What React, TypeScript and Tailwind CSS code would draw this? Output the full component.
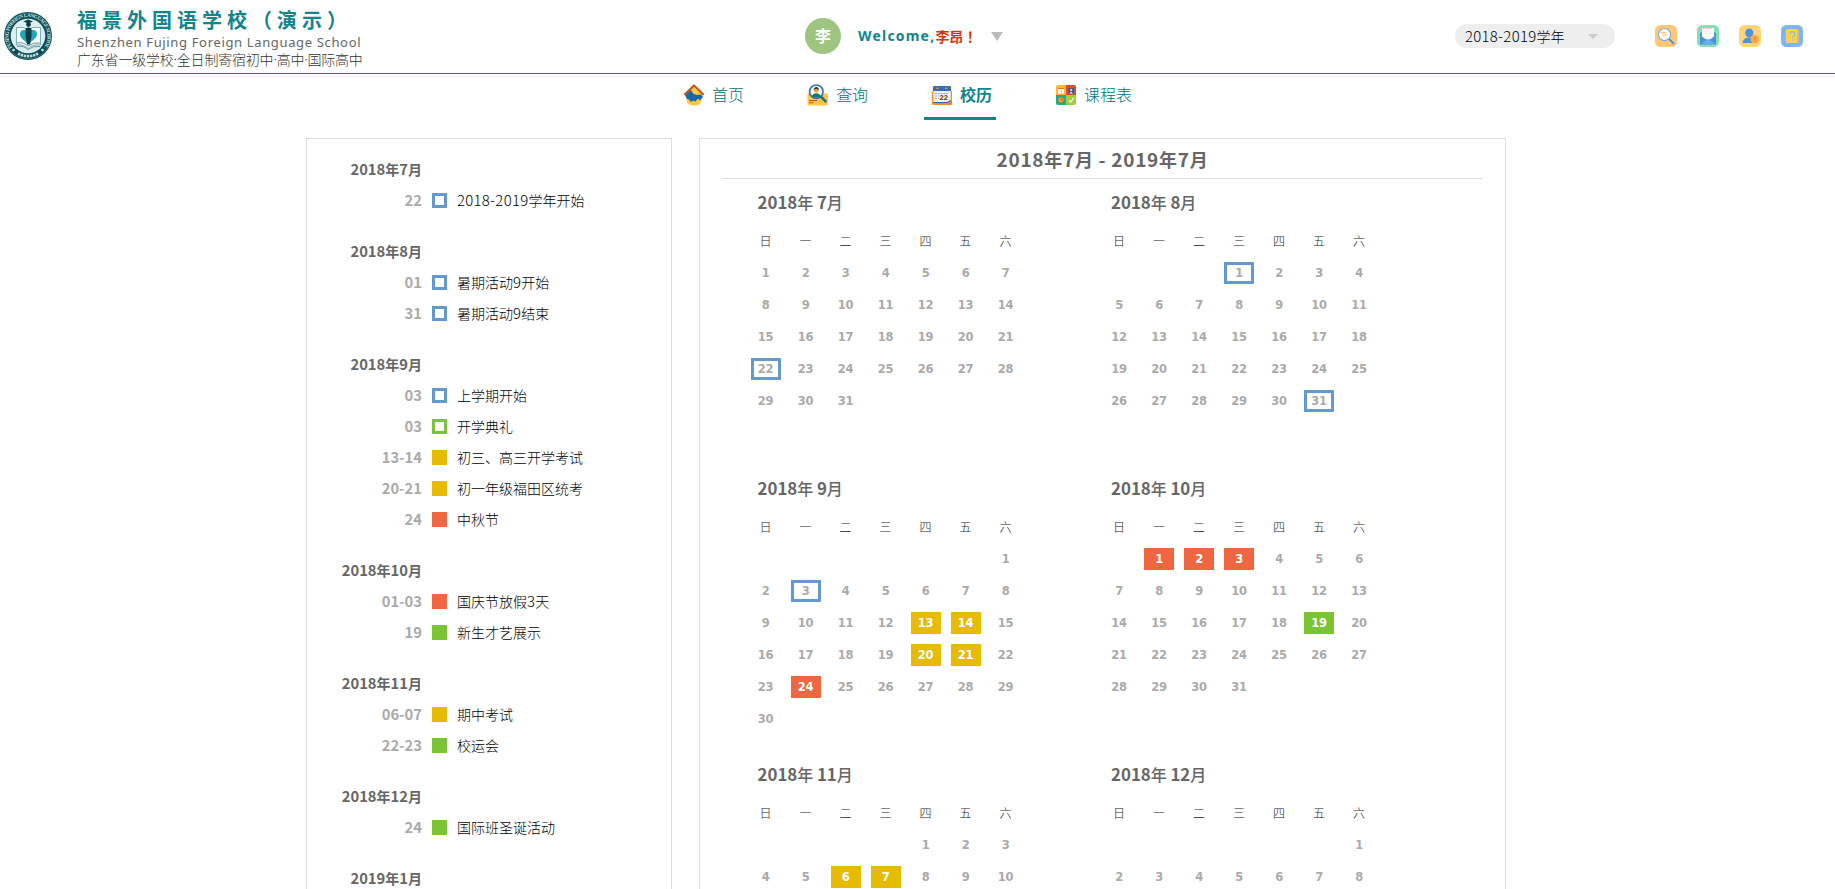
import React from "react";

type Kind = "blueBox" | "greenBox" | "yellow" | "red" | "green";

const swatch: Record<Kind, string> = {
  blueBox: "border-3 border-[#6499cd]",
  greenBox: "border-3 border-[#7bc434]",
  yellow: "bg-[#e7ba04]",
  red: "bg-[#ee6741]",
  green: "bg-[#7bc434]",
};

const dayMark: Record<Kind, string> = {
  blueBox: "border-3 border-[#6499cd] text-[#aaa]",
  greenBox: "border-3 border-[#7bc434] text-[#aaa]",
  yellow: "bg-[#e7ba04] text-white",
  red: "bg-[#ee6741] text-white",
  green: "bg-[#7bc434] text-white",
};

const groups: { month: string; events: [string, Kind, string][] }[] = [
  { month: "2018年7月", events: [["22", "blueBox", "2018-2019学年开始"]] },
  {
    month: "2018年8月",
    events: [
      ["01", "blueBox", "暑期活动9开始"],
      ["31", "blueBox", "暑期活动9结束"],
    ],
  },
  {
    month: "2018年9月",
    events: [
      ["03", "blueBox", "上学期开始"],
      ["03", "greenBox", "开学典礼"],
      ["13-14", "yellow", "初三、高三开学考试"],
      ["20-21", "yellow", "初一年级福田区统考"],
      ["24", "red", "中秋节"],
    ],
  },
  {
    month: "2018年10月",
    events: [
      ["01-03", "red", "国庆节放假3天"],
      ["19", "green", "新生才艺展示"],
    ],
  },
  {
    month: "2018年11月",
    events: [
      ["06-07", "yellow", "期中考试"],
      ["22-23", "green", "校运会"],
    ],
  },
  { month: "2018年12月", events: [["24", "green", "国际班圣诞活动"]] },
  { month: "2019年1月", events: [] },
];

const months: { label: string; start: number; days: number; marks: Record<number, Kind> }[] = [
  { label: "2018年 7月", start: 0, days: 31, marks: { 22: "blueBox" } },
  { label: "2018年 8月", start: 3, days: 31, marks: { 1: "blueBox", 31: "blueBox" } },
  {
    label: "2018年 9月",
    start: 6,
    days: 30,
    marks: { 3: "blueBox", 13: "yellow", 14: "yellow", 20: "yellow", 21: "yellow", 24: "red" },
  },
  { label: "2018年 10月", start: 1, days: 31, marks: { 1: "red", 2: "red", 3: "red", 19: "green" } },
  { label: "2018年 11月", start: 4, days: 10, marks: { 6: "yellow", 7: "yellow" } },
  { label: "2018年 12月", start: 6, days: 8, marks: {} },
];

const weekdays = ["日", "一", "二", "三", "四", "五", "六"];

/* Sets digit runs slightly larger than the Chinese characters beside them. */
function Mixed({ text, light }: { text: string; light?: boolean }) {
  return (
    <>
      {text.split(/([0-9-]+)/).map((part, i) =>
        i % 2 ? (
          <span key={i} className={light ? "text-[1.065em] tracking-[0.3px]" : "text-[1.055em]"}>
            {part}
          </span>
        ) : (
          part
        ),
      )}
    </>
  );
}

function SchoolLogo() {
  return (
    <svg className="h-12 w-12 shrink-0" viewBox="0 0 48 48">
      <defs>
        <path id="ring" d="M8.2 35.5A19.4 19.4 0 1 1 39.8 35.5" />
      </defs>
      <circle cx="24" cy="24" r="24" fill="#0c4b55" />
      <circle cx="24" cy="24" r="22.8" fill="none" stroke="#5d98a0" strokeWidth=".5" />
      <circle cx="24" cy="24" r="17.3" fill="#d9eef3" />
      <text fontSize="5" fontWeight="700" fill="#d5e8ea" fontFamily="Liberation Serif, serif" textLength="84">
        <textPath href="#ring">FUJING FOREIGN LANGUAGE SCHOOL</textPath>
      </text>
      <circle cx="9.5" cy="38" r="1.3" fill="#d5e8ea" />
      <circle cx="38.5" cy="38" r="1.3" fill="#d5e8ea" />
      <path d="M14 41.500A20.200 20.200 0 0 0 34 41.500" fill="none" stroke="#c5dcdf" strokeWidth="2.6" strokeDasharray="2.4 .7" />
      <path d="M12.500 15.500h7L24 18l4.500-2.500h8V33q-8-1-12.500 3.500-4-4.500-11.500-3.500z" fill="#f7fcfd" stroke="#5a8d98" strokeWidth=".7" />
      <path d="M13 31q7-1 11 3 5-4 12-3M13 34.500q7-1 11 3 5-4 12-3" fill="none" stroke="#33707c" strokeWidth=".7" />
      <path d="M24 32.500c-3-4-8-6-8-10.500 0-4.500 5-5 8-2 4-3 9-2.500 9 2 0 4.500-5 6.500-9 10.500z" fill="#1fa9b8" />
      <path d="M19.500 9.500L24 7.500l5 2-5 2z" fill="#0c3c46" />
      <circle cx="24.500" cy="12.500" r="2.400" fill="#0c3c46" />
      <path d="M21.500 16.500q3-2 6 0v8l-1.500 8h-3l-1.500-8z" fill="#0c3c46" />
    </svg>
  );
}

function HomeIcon() {
  return (
    <svg className="h-[22px] w-5" viewBox="0 0 20 22">
      <path d="M10 3l7.500 7v6q0 5.500-7.500 5.500T2.500 16v-6z" fill="#ffc83d" />
      <path d="M1 11l6-5 2 3.500L12.500 11l5-.5 1.500 2.500-3 3.500-2-2-2.500 3-2.500-1-2 1.500-2-2.500-2-.5z" fill="#1668ad" />
      <path d="M10 1.500L1 10.200M10 1.500l9 8.700" stroke="#c4520f" strokeWidth="2" fill="none" strokeLinecap="round" />
    </svg>
  );
}

function QueryIcon() {
  return (
    <svg className="-ml-px h-[22px] w-[21px]" viewBox="0 0 21 22">
      <path d="M.5 10.500Q.5 9.500 1.500 9.500h18.500q1 0 1 1V20q0 1.500-1.500 1.500H2Q.5 21.500.5 20z" fill="#ffc843" />
      <path d="M2 16.500h8M2 18.800h4.500" stroke="#c9540f" strokeWidth="1" />
      <circle cx="9.300" cy="7.700" r="6.700" fill="#fff" stroke="#3c74ae" strokeWidth="1.700" />
      <circle cx="9.300" cy="6.300" r="2.400" fill="#f7a13b" />
      <path d="M6.600 6Q7 3 9.300 3t2.700 3l-2.700-1.200z" fill="#173a57" />
      <path d="M4.700 12.300q1.500-3.100 4.600-3.100t4.600 3.100q-4.600 2.900-9.200 0z" fill="#137d66" />
      <path d="M14.200 12.800l4.300 4.600" stroke="#2e629a" strokeWidth="2.600" strokeLinecap="round" />
    </svg>
  );
}

function CalendarIcon() {
  return (
    <svg className="h-[22px] w-5" viewBox="0 0 20 22">
      <path d="M0 7h20v11l-3 3H1.500Q0 21 0 19.500z" fill="#ff8e12" />
      <path d="M1.300 5h17.400v11.500l-3 2.500H1.300z" fill="#edf3fa" />
      <path d="M1.300 18.500h14.200l3-2" stroke="#2f62b5" strokeWidth="1.200" fill="none" />
      <path d="M1 3q0-1 1-1h16q1 0 1 1v4H1z" fill="#3769b8" />
      <path d="M4 4.200h3M13 4.200h3" stroke="#c9b82b" strokeWidth="1" />
      <path d="M3 9.500h14M3 12h4M3 14.500h4" stroke="#a4acb5" strokeWidth="1" strokeDasharray="2 .8" />
      <text x="7.500" y="16.300" fontSize="7.500" fontWeight="700" fill="#39434d" fontFamily="Liberation Sans, sans-serif">
        22
      </text>
      <path d="M15 21l5-5v3.500Q20 21 18.500 21z" fill="#ff7a00" />
    </svg>
  );
}

function TimetableIcon() {
  return (
    <svg className="h-[22px] w-5" viewBox="0 0 20 22">
      <path d="M0 3q0-2 2-2h8v10H0z" fill="#ffb92c" />
      <path d="M10 1h8q2 0 2 2v8H10z" fill="#d8502b" />
      <path d="M0 11h10v10H2q-2 0-2-2z" fill="#12b08f" />
      <path d="M10 11h10v8q0 2-2 2h-8z" fill="#a0cf3a" />
      <rect x="2" y="4.500" width="6" height="5" fill="#fff" />
      <path d="M2 4.500h6" stroke="#d8702b" strokeWidth="1" />
      <path d="M4.500 6.500h1v2" stroke="#aaa" strokeWidth=".7" fill="none" />
      <rect x="12.500" y="4" width="5.500" height="6" rx=".5" fill="#2b56b0" />
      <circle cx="15.200" cy="6" r="1.200" fill="#ffd24a" />
      <path d="M13.300 9.500q1.900-3 3.800 0z" fill="#fff" />
      <circle cx="5" cy="15.800" r="2.900" fill="#f6a53a" stroke="#c96a16" strokeWidth=".7" />
      <path d="M5 14v2h1.800" stroke="#8a4510" strokeWidth=".7" fill="none" />
      <path d="M13 16.300l1.700 1.700 3-4.200" stroke="#fff" strokeWidth="1.200" fill="none" />
    </svg>
  );
}

function SearchTool() {
  return (
    <svg className="h-[22px] w-[22px]" viewBox="0 0 22 22">
      <rect width="22" height="22" rx="5.500" fill="#ffc876" />
      <path d="M13.500 13.500l5 4.800" stroke="#4a90d9" strokeWidth="2" strokeLinecap="round" />
      <circle cx="9.500" cy="9.500" r="6" fill="#fff" stroke="#79aee3" strokeWidth="1.100" />
      <path d="M6 7.700h5M7 10h5" stroke="#ffb24f" strokeWidth=".9" strokeLinecap="round" />
    </svg>
  );
}

function MailTool() {
  return (
    <svg className="h-[22px] w-[22px]" viewBox="0 0 22 22">
      <rect width="22" height="22" rx="5.500" fill="#81e0b4" />
      <path d="M3 8.500l2-1.500h12l2 1.500V19.500H3z" fill="#4a92dc" />
      <path d="M5 3h12v8.500q-3 3-6 3t-6-3z" fill="#fff" />
      <path d="M6 3.500h10" stroke="#f3a9a9" strokeWidth=".9" strokeDasharray="1.500 1" />
      <path d="M6.500 6h8M6.500 8.200h9" stroke="#d5dce6" strokeWidth=".7" />
      <path d="M3 19.500l6.500-4.500h3l6.500 4.500z" fill="#67abec" />
    </svg>
  );
}

function UserTool() {
  return (
    <svg className="h-[22px] w-[22px]" viewBox="0 0 22 22">
      <rect width="22" height="22" rx="5.500" fill="#ffd578" />
      <ellipse cx="10.300" cy="7.800" rx="4.100" ry="4.400" fill="#4c93dc" />
      <path d="M3.500 18q0-4 5-5.500h3.500q4 1.500 4.500 5.500z" fill="#4c93dc" />
      <circle cx="15.800" cy="14.200" r="4.200" fill="#ffab42" />
      <path d="M15.800 11.800v3M15.800 15.800v1" stroke="#e97a2e" strokeWidth="1.100" />
    </svg>
  );
}

function HelpTool() {
  return (
    <svg className="h-[22px] w-[22px]" viewBox="0 0 22 22">
      <rect width="22" height="22" rx="5.500" fill="#7db4fb" />
      <rect x="5" y="4" width="12.500" height="14" rx="1" fill="#ffd044" />
      <path d="M16.500 4v14" stroke="#f5bd2d" strokeWidth="1.200" />
      <path d="M4 6.500h3M4 9.500h3M4 12.500h3M4 15.500h3" stroke="#c8d0a0" strokeWidth="1.100" />
      <path d="M9.300 9q0-2.300 2.200-2.300T13.700 9q0 1.200-1.200 2t-1 2M11.500 14.300v1.300" stroke="#8dbcec" strokeWidth="1.200" fill="none" />
    </svg>
  );
}

const tabs = [
  { label: "首页", Icon: HomeIcon },
  { label: "查询", Icon: QueryIcon },
  { label: "校历", Icon: CalendarIcon, active: true },
  { label: "课程表", Icon: TimetableIcon },
];

function Month({ label, start, days, marks }: (typeof months)[number]) {
  return (
    <section className="h-[286px]">
      <h2 className="flex h-[46px] items-center pl-3 text-base font-medium whitespace-pre text-[#666]">
        <span className="font-bold">
          <Mixed text={label.slice(0, 4)} />
        </span>
        {"年 "}
        <span className="font-bold">
          <Mixed text={label.slice(6, -1)} />
        </span>
        月
      </h2>
      <div className="grid w-[280px] grid-cols-7">
        {weekdays.map((d) => (
          <div key={d} className="flex h-8 items-center justify-center text-xs font-light text-[#222]">
            {d}
          </div>
        ))}
        {Array.from({ length: start }, (_, i) => (
          <div key={`blank-${i}`} />
        ))}
        {Array.from({ length: days }, (_, i) => i + 1).map((day) => (
          <div key={day} className="flex h-8 items-center justify-center">
            <div
              className={`flex h-[22px] w-[30px] items-center justify-center pt-0.5 font-['DejaVu_Sans',sans-serif] text-[11.5px] leading-none font-bold tracking-[-0.35px] ${
                marks[day] ? dayMark[marks[day]] : "text-[#aaa]"
              }`}
            >
              {day}
            </div>
          </div>
        ))}
      </div>
    </section>
  );
}

export default function App() {
  return (
    <div className="h-screen w-full overflow-hidden bg-white font-['Noto_Sans_CJK_SC',sans-serif] text-black">
      <header className="flex h-[74px] items-center border-b border-[#0b7f86] pr-8 pb-px pl-1">
        <SchoolLogo />
        <div className="ml-[25px] w-[728px] pt-0.5 whitespace-nowrap">
          <h1 className="text-[20px] leading-[27px] font-bold tracking-[5px] text-[#10858c]">
            福景外国语学校
            <span className="font-['Noto_Sans_CJK_TC',sans-serif]">（</span>
            演示
            <span className="font-['Noto_Sans_CJK_TC',sans-serif]">）</span>
          </h1>
          <p className="font-['Noto_Sans',sans-serif] text-[13px] leading-[18px] tracking-[0.65px] text-[#666]">
            Shenzhen Fujing Foreign Language School
          </p>
          <p className="font-['Noto_Sans','Noto_Sans_CJK_SC',sans-serif] text-sm leading-[18px] font-light tracking-[-0.2px] text-[#333]">
            广东省一级学校·全日制寄宿初中·高中·国际高中
          </p>
        </div>
        <div className="flex w-[650px] items-center">
          <span className="flex h-9 w-9 items-center justify-center rounded-full bg-[#9dc481] pb-0.5 text-base font-bold text-white">
            李
          </span>
          <span className="ml-[17px] font-['Noto_Sans',sans-serif] text-sm font-bold tracking-[1.2px] text-[#10858c]">
            Welcome,
          </span>
          <span className="font-['Noto_Sans_CJK_TC',sans-serif] text-sm font-bold text-[#d0390f]">李昂！</span>
          <svg className="ml-[14px] h-[9px] w-3" viewBox="0 0 12 9">
            <path d="M0 0h12L6 9z" fill="#bbb" />
          </svg>
        </div>
        <div className="flex h-6 w-40 shrink-0 items-center justify-between rounded-full bg-[#eee] pr-[17px] pl-2.5 text-sm font-light">
          <span className="pb-px">
            <Mixed text="2018-2019学年" light />
          </span>
          <svg className="h-[5px] w-2.5" viewBox="0 0 10 5">
            <path d="M0 0h10L5 5z" fill="#ccc" />
          </svg>
        </div>
        <div className="ml-10 flex gap-5">
          <SearchTool />
          <MailTool />
          <UserTool />
          <HelpTool />
        </div>
      </header>

      <nav className="flex h-16 gap-[52px] pl-[676px]">
        {tabs.map(({ label, Icon, active }) => (
          <a
            key={label}
            className={`flex h-[46px] items-center gap-2 border-b-3 pr-1 pb-0.5 pl-2 text-base ${
              active ? "border-[#10858c] font-bold text-[#10858c]" : "border-transparent font-light text-[#00757c]"
            }`}
          >
            <Icon />
            <span className="pb-0.5">{label}</span>
          </a>
        ))}
      </nav>

      <main className="flex gap-[27px] pl-[306px]">
        <aside className="h-[800px] w-[366px] border border-[#ddd] pt-[15px]">
          {groups.map((g) => (
            <section key={g.month} className="mb-5">
              <h3 className="flex h-[31px] w-[115px] items-center justify-end pb-0.5 text-sm font-bold whitespace-nowrap text-[#666]">
                <Mixed text={g.month} />
              </h3>
              {g.events.map(([date, kind, name]) => (
                <div key={date + name} className="flex h-[31px] items-center text-sm">
                  <span className="w-[115px] pb-0.5 text-right font-bold text-[#aaa]">
                    <Mixed text={date} />
                  </span>
                  <span className={`mr-2.5 ml-2.5 h-[15px] w-[15px] ${swatch[kind]}`} />
                  <span className="pb-0.5 font-light">
                    <Mixed text={name} light />
                  </span>
                </div>
              ))}
            </section>
          ))}
        </aside>

        <div className="h-[800px] w-[807px] border border-[#ddd] px-[22px]">
          <h1 className="flex h-10 items-center justify-center border-b border-[#ddd] pt-px text-lg font-bold tracking-[0.75px] text-[#666]">
            <span className="whitespace-pre">
              <Mixed text="2018年7月 - 2019年7月" />
            </span>
          </h1>
          <div className="grid w-[731px] grid-cols-[353.5px_353.5px] pl-[23.5px]">
            {months.map((m) => (
              <Month key={m.label} {...m} />
            ))}
          </div>
        </div>
      </main>
    </div>
  );
}
